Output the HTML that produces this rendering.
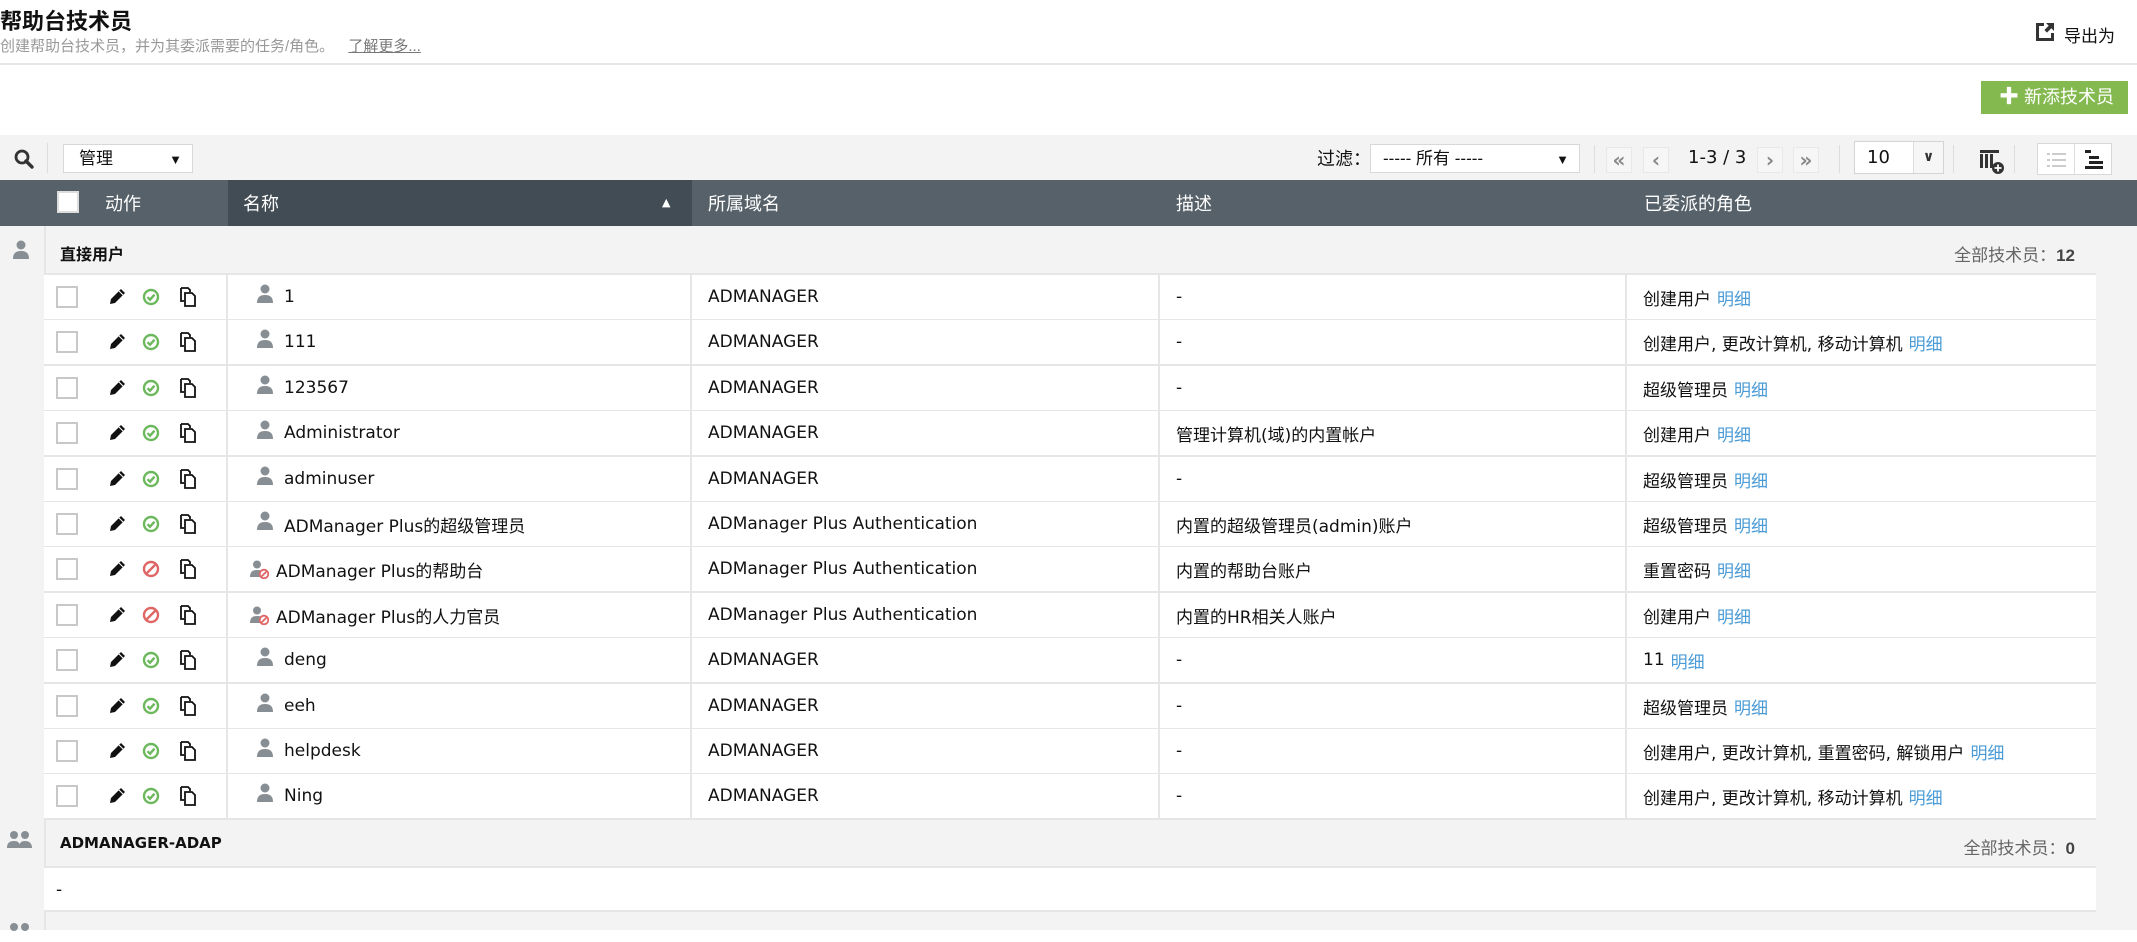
<!DOCTYPE html>
<html><head><meta charset="utf-8"><style>
*{box-sizing:border-box;margin:0;padding:0}
body{width:2137px;height:930px;overflow:hidden;background:#fff;font-family:"DejaVu Sans","Liberation Sans","Noto Sans CJK SC",sans-serif;font-size:17px;color:#111;position:relative}
.a{position:absolute}
.cjk{font-family:"Liberation Sans","Noto Sans CJK SC",sans-serif}
.row{position:absolute;left:44px;width:2052px;height:46px;background:#fff;border-bottom:2px solid #e6e6e6}
.row>div{position:absolute;top:0;height:44px;display:flex;align-items:center;white-space:nowrap;overflow:hidden}
.c1{left:0;width:184px;padding-left:12px;border-right:2px solid #e6e6e6}
.c2{left:184px;width:464px;padding-left:26px;border-right:2px solid #e6e6e6}
.c3{left:648px;width:468px;padding-left:16px;border-right:2px solid #e6e6e6}
.c4{left:1116px;width:467px;padding-left:16px;border-right:2px solid #e6e6e6}
.c5{left:1583px;width:469px;padding-left:16px}
.cb{width:22px;height:22px;border:2px solid #c8c8c8;background:#fff;display:inline-block;flex-shrink:0}
.lk{color:#4a9bd6;margin-left:6px}
.btn{position:absolute;background:#f6f6f6;border:1px solid #e8e8e8;color:#888;font-size:20px;text-align:center;line-height:24px;font-weight:bold}
.hd{position:absolute;top:180px;height:46px;color:#fff;display:flex;align-items:center;font-family:"Liberation Sans","Noto Sans CJK SC",sans-serif;font-size:18px}
</style></head><body>
<div class="a cjk" style="left:0;top:4px;font-size:22px;font-weight:bold">帮助台技术员</div>
<div class="a cjk" style="left:0;top:35px;font-size:15px;color:#999">创建帮助台技术员，并为其委派需要的任务/角色。 <span style="margin-left:10px;text-decoration:underline;color:#777">了解更多...</span></div>
<svg class="a" style="left:2035px;top:22px" width="20" height="20" viewBox="0 0 20 20"><path d="M1 1h8v3H4v12h12v-5h3v8H1z" fill="#333"/><path d="M11 1h8v8l-2.7-2.7-4.3 4.3-2.6-2.6 4.3-4.3z" fill="#333"/></svg>
<div class="a cjk" style="left:2064px;top:22px;font-size:17px">导出为</div>
<div class="a" style="left:0;top:63px;width:2137px;height:2px;background:#e6e6e6"></div>
<div class="a cjk" style="left:1981px;top:81px;width:147px;height:33px;background:#84b94f;color:#fff;font-size:18px;line-height:33px;padding-left:18px"><b style="font-size:20px">✚</b> 新添技术员</div>
<div class="a" style="left:0;top:135px;width:2137px;height:45px;background:#f3f3f3"></div>
<svg class="a" style="left:13px;top:148px" width="22" height="22" viewBox="0 0 22 22"><circle cx="9" cy="9" r="6" fill="none" stroke="#333" stroke-width="2.8"/><path d="M13 13l6 6" stroke="#333" stroke-width="3.4" stroke-linecap="round"/></svg>
<div class="a" style="left:47px;top:143px;width:1px;height:30px;background:#ddd"></div>
<div class="a cjk" style="left:63px;top:144px;width:130px;height:29px;background:#fff;border:1px solid #d8d8d8;font-size:17px;line-height:27px;padding-left:15px">管理<span style="position:absolute;right:10px;top:1px;font-size:13px">▼</span></div>
<div class="a cjk" style="left:1317px;top:145px;font-size:18px">过滤：</div>
<div class="a cjk" style="left:1370px;top:144px;width:210px;height:29px;background:#fff;border:1px solid #d8d8d8;font-size:17px;line-height:27px;padding-left:12px">----- 所有 -----<span style="position:absolute;right:10px;top:1px;font-size:13px">▼</span></div>
<div class="a" style="left:1594px;top:145px;width:1px;height:28px;background:#ddd"></div>
<div class="btn" style="left:1606px;top:147px;width:26px;height:26px">«</div>
<div class="btn" style="left:1643px;top:147px;width:26px;height:26px">‹</div>
<div class="a" style="left:1688px;top:147px;font-size:18px">1-3 / 3</div>
<div class="btn" style="left:1757px;top:147px;width:26px;height:26px">›</div>
<div class="btn" style="left:1793px;top:147px;width:26px;height:26px">»</div>
<div class="a" style="left:1839px;top:145px;width:1px;height:28px;background:#ddd"></div>
<div class="a" style="left:1854px;top:141px;width:90px;height:33px;background:#fff;border:1px solid #d4d4d4;font-size:18px;line-height:31px;padding-left:12px">10<div style="position:absolute;right:0;top:0;width:30px;height:31px;border-left:1px solid #ddd;background:#f6f6f6;text-align:center;font-size:14px;font-weight:bold;color:#333">∨</div></div>
<div class="a" style="left:1953px;top:145px;width:1px;height:28px;background:#ddd"></div>
<svg class="a" style="left:1979px;top:149px" width="26" height="26" viewBox="0 0 26 26"><rect x="1" y="1" width="19" height="3" fill="#333"/><rect x="1" y="5" width="3" height="14" fill="#333"/><rect x="6" y="5" width="3" height="14" fill="#333"/><rect x="11" y="5" width="3" height="14" fill="#333"/><circle cx="19" cy="19" r="6" fill="#333"/><path d="M19 15.5v7M15.5 19h7" stroke="#fff" stroke-width="1.8"/></svg>
<div class="a" style="left:2014px;top:145px;width:1px;height:28px;background:#ddd"></div>
<div class="a" style="left:2037px;top:143px;width:75px;height:32px;border:1px solid #d8d8d8;background:#fff"><div style="position:absolute;left:36px;top:0;width:1px;height:30px;background:#ddd"></div>
<svg style="position:absolute;left:9px;top:8px" width="20" height="16"><g fill="#ccc"><rect x="0" y="1" width="3" height="2"/><rect x="5" y="1" width="14" height="2"/><rect x="0" y="7" width="3" height="2"/><rect x="5" y="7" width="14" height="2"/><rect x="0" y="13" width="3" height="2"/><rect x="5" y="13" width="14" height="2"/></g></svg>
<svg style="position:absolute;left:47px;top:6px" width="20" height="20"><g fill="#222"><rect x="0" y="0" width="6" height="3"/><rect x="4" y="6" width="10" height="3"/><rect x="4" y="11" width="14" height="3"/><rect x="0" y="16" width="18" height="3"/></g></svg></div>
<div class="a" style="left:0;top:180px;width:2137px;height:46px;background:#566169"></div>
<div class="a" style="left:228px;top:180px;width:464px;height:46px;background:#414c54"></div>
<div class="a" style="left:57px;top:191px;width:22px;height:22px;background:#fff;border:2px solid #ddd"></div>
<div class="hd" style="left:105px">动作</div>
<div class="hd" style="left:243px">名称</div>
<div class="a" style="left:662px;top:196px;color:#fff;font-size:11px">▲</div>
<div class="hd" style="left:708px">所属域名</div>
<div class="hd" style="left:1176px">描述</div>
<div class="hd" style="left:1644px">已委派的角色</div>
<div class="a" style="left:0;top:226px;width:2137px;height:704px;background:#f3f3f3"></div>
<div class="a" style="left:44px;top:226px;width:2px;height:704px;background:#e6e6e6"></div>
<svg class="a" style="left:12px;top:240px" width="18" height="20" viewBox="0 0 18 20"><circle cx="9" cy="5" r="4.5" fill="#888f94"/><path d="M1 19c0-6 3-8 8-8s8 2 8 8z" fill="#888f94"/></svg>
<div class="a cjk" style="left:60px;top:241px;font-weight:bold;font-size:16px">直接用户</div>
<div class="a cjk" style="right:62px;top:241px;font-size:17px;color:#666">全部技术员：<b style="color:#444">12</b></div>
<div class="a" style="left:44px;top:273px;width:2052px;height:2px;background:#e6e6e6"></div>

<svg width="0" height="0" style="position:absolute"><defs>
<g id="pen"><path d="M13 1l4 4-10 10-5 1 1-5z" fill="#111"/><path d="M11 3l4 4" stroke="#fff" stroke-width="1"/></g>
<g id="ok"><circle cx="9" cy="9" r="7" fill="none" stroke="#6cb85c" stroke-width="2.4"/><path d="M5.5 9.2l2.5 2.5 4.5-5" fill="none" stroke="#6cb85c" stroke-width="2.4"/></g>
<g id="no"><circle cx="9" cy="9" r="7" fill="none" stroke="#e06666" stroke-width="2.4"/><path d="M4.5 13.5l9-9" stroke="#e06666" stroke-width="2.4"/></g>
<g id="cp"><path d="M1 1h7l2 2v2M1 1v13h3" fill="none" stroke="#111" stroke-width="1.8"/><path d="M5 6h7l3 3v10H5z" fill="#fff" stroke="#111" stroke-width="1.8"/></g>
<g id="us"><circle cx="9" cy="5" r="4.5" fill="#888f94"/><path d="M1 19c0-6 3-8 8-8s8 2 8 8z" fill="#888f94"/></g>
<g id="ud"><circle cx="7" cy="4.5" r="4" fill="#888f94"/><path d="M0 17c0-5 2.5-7 7-7s6 1 6 3v4z" fill="#888f94"/><circle cx="14" cy="14" r="4.3" fill="#fff" stroke="#e06666" stroke-width="1.8"/><path d="M11 17l6-6" stroke="#e06666" stroke-width="1.8"/></g>
</defs></svg>

<div id="rows"></div>
<script>
var d=[["1","ADMANAGER","-","创建用户",0],["111","ADMANAGER","-","创建用户, 更改计算机, 移动计算机",0],["123567","ADMANAGER","-","超级管理员",0],["Administrator","ADMANAGER","管理计算机(域)的内置帐户","创建用户",0],["adminuser","ADMANAGER","-","超级管理员",0],["ADManager Plus的超级管理员","ADManager Plus Authentication","内置的超级管理员(admin)账户","超级管理员",0],["ADManager Plus的帮助台","ADManager Plus Authentication","内置的帮助台账户","重置密码",1],["ADManager Plus的人力官员","ADManager Plus Authentication","内置的HR相关人账户","创建用户",1],["deng","ADMANAGER","-","11",0],["eeh","ADMANAGER","-","超级管理员",0],["helpdesk","ADMANAGER","-","创建用户, 更改计算机, 重置密码, 解锁用户",0],["Ning","ADMANAGER","-","创建用户, 更改计算机, 移动计算机",0]];
var h="";
d.forEach(function(r,i){var t=Math.round(275+i*45.4);
h+='<div class="row" style="top:'+t+'px"><div class="c1"><span class="cb"></span><svg style="margin-left:30px;flex-shrink:0" width="18" height="18"><use href="#pen"/></svg><svg style="margin-left:16px;flex-shrink:0" width="18" height="18"><use href="#'+(r[4]?'no':'ok')+'"/></svg><svg style="margin-left:20px;flex-shrink:0" width="17" height="21"><use href="#cp"/></svg></div>'+
'<div class="c2" style="padding-left:'+(r[4]?22:28)+'px">'+(r[4]?'<svg width="20" height="19"><use href="#ud"/></svg>':'<svg width="18" height="20" style="margin-top:-6px"><use href="#us"/></svg>')+'<span style="margin-left:'+(r[4]?6:10)+'px">'+r[0]+'</span></div>'+
'<div class="c3">'+r[1]+'</div><div class="c4">'+r[2]+'</div><div class="c5">'+r[3]+'<span class="lk">明细</span></div></div>';});
document.getElementById("rows").innerHTML=h;
</script>
<svg class="a" style="left:6px;top:830px" width="28" height="20" viewBox="0 0 28 20"><circle cx="8" cy="5" r="4" fill="#888f94"/><circle cx="19" cy="5" r="4" fill="#888f94"/><path d="M1 18c0-5 2.5-7 7-7s6 2 6 7zM13 18c0-5 2-7 6-7s7 2 7 7z" fill="#888f94"/></svg>
<div class="a" style="left:60px;top:834px;font-weight:bold;font-size:15px">ADMANAGER-ADAP</div>
<div class="a cjk" style="right:62px;top:834px;font-size:17px;color:#666">全部技术员：<b style="color:#444">0</b></div>
<div class="a" style="left:44px;top:866px;width:2052px;height:46px;background:#fff;border-top:2px solid #e6e6e6;border-bottom:2px solid #e6e6e6;padding:12px 0 0 12px">-</div>
<svg class="a" style="left:6px;top:922px" width="28" height="20" viewBox="0 0 28 20"><circle cx="8" cy="5" r="4" fill="#888f94"/><circle cx="19" cy="5" r="4" fill="#888f94"/></svg>
</body></html>
